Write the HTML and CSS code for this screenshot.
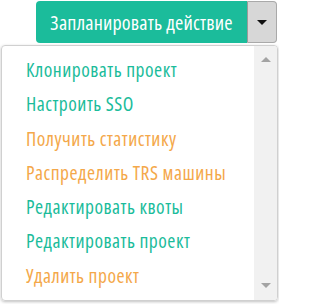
FILE: index.html
```html
<!DOCTYPE html>
<html lang="ru">
<head>
<meta charset="utf-8">
<link rel="stylesheet" href="styles.css">
</head>
<body>
<div class="wrap">
  <div class="btn-group">
    <button class="btn-main">Запланировать действие</button>
    <button class="btn-caret"><span class="caret"></span></button>
  </div>
  <div class="menu">
    <ul class="list">
      <li class="item ok">Клонировать проект</li>
      <li class="item ok">Настроить SSO</li>
      <li class="item warn">Получить статистику</li>
      <li class="item warn">Распределить TRS машины</li>
      <li class="item ok">Редактировать квоты</li>
      <li class="item ok">Редактировать проект</li>
      <li class="item warn">Удалить проект</li>
    </ul>
    <div class="scrollbar">
      <span class="arrow up"></span>
      <span class="arrow down"></span>
    </div>
  </div>
</div>
</body>
</html>
```
FILE: styles.css
```css
html, body {
  margin: 0;
  padding: 0;
  background: #ffffff;
}
.wrap {
  width: 279px;
  height: 304px;
  overflow: hidden;
  font-family: "Open Sans", "DejaVu Sans Condensed", sans-serif;
  font-stretch: 75%;
}
.btn-group {
  display: flex;
  justify-content: flex-end;
  padding: 1px 2px 0 0;
}
.btn-main {
  width: 211px;
  height: 42px;
  border: none;
  background: #1bbc9b;
  color: #ffffff;
  font-family: inherit;
  font-stretch: 75%;
  font-size: 20px;
  letter-spacing: 0.2px;
  white-space: nowrap;
  border-radius: 4px 0 0 4px;
  padding: 0;
}
.btn-caret {
  width: 30px;
  height: 42px;
  border: 1px solid #a9a9a9;
  border-left-color: #9a9a9a;
  background: #d7d7d7;
  border-radius: 0 4px 4px 0;
  display: flex;
  align-items: center;
  justify-content: center;
  padding: 0;
}
.caret {
  width: 0;
  height: 0;
  border-left: 5px solid transparent;
  border-right: 5px solid transparent;
  border-top: 5px solid #111;
}
.menu {
  margin: 2px 1px 0 1px;
  height: 256px;
  border: 1px solid #d0d0d0;
  border-radius: 4px;
  box-shadow: 0 1px 3px rgba(0,0,0,0.25);
  display: flex;
  overflow: hidden;
  box-sizing: border-box;
}
.list {
  flex: 1;
  min-width: 0;
  list-style: none;
  margin: 0;
  padding: 7px 0 0 0;
}
.item {
  height: 34.3px;
  line-height: 34px;
  padding-left: 24px;
  font-size: 19.5px;
  letter-spacing: 0.5px;
  white-space: nowrap;
}
.ok { color: #1bbc9b; }
.warn { color: #f4a84a; }
.scrollbar {
  flex: none;
  width: 23px;
  background: #f1f1f1;
  display: flex;
  flex-direction: column;
  justify-content: space-between;
  align-items: center;
  padding: 11px 0 12px;
}
.arrow {
  width: 0;
  height: 0;
  border-left: 5px solid transparent;
  border-right: 5px solid transparent;
}
.arrow.up { border-bottom: 5px solid #a3a3a3; }
.arrow.down { border-top: 5px solid #a3a3a3; }
```
